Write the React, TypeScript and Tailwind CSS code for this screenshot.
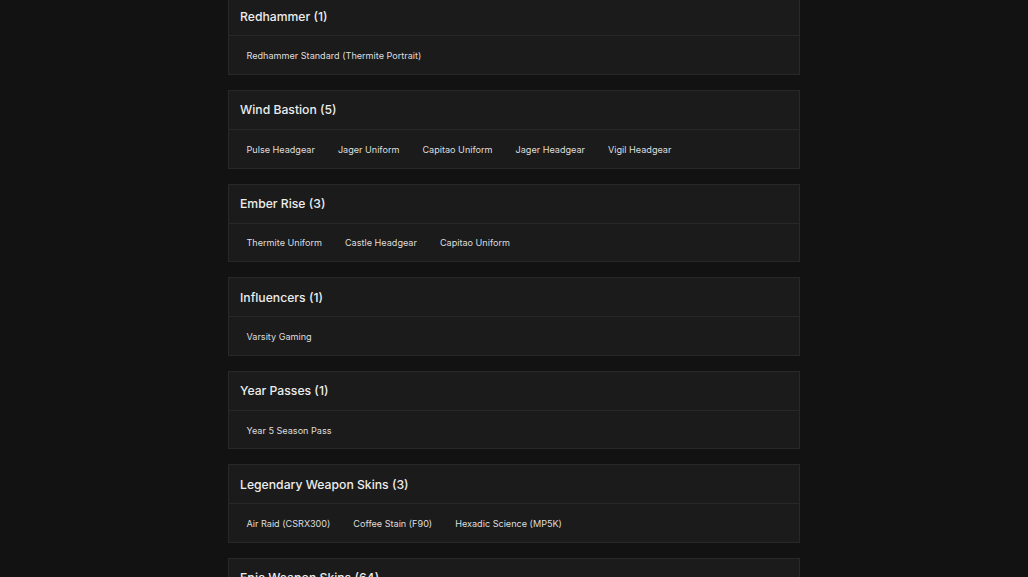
const sections = [
  { title: "Redhammer", items: ["Redhammer Standard (Thermite Portrait)"] },
  {
    title: "Wind Bastion",
    items: ["Pulse Headgear", "Jager Uniform", "Capitao Uniform", "Jager Headgear", "Vigil Headgear"],
  },
  { title: "Ember Rise", items: ["Thermite Uniform", "Castle Headgear", "Capitao Uniform"] },
  { title: "Influencers", items: ["Varsity Gaming"] },
  { title: "Year Passes", items: ["Year 5 Season Pass"] },
  {
    title: "Legendary Weapon Skins",
    items: ["Air Raid (CSRX300)", "Coffee Stain (F90)", "Hexadic Science (MP5K)"],
  },
  { title: "Epic Weapon Skins", count: 64, items: [] as string[] },
];

const App = () => {
  return (
    <div className="h-screen bg-[#121212] font-['Inter',sans-serif] overflow-hidden">
      <div className="w-[572px] mx-auto mt-[-3.6px] flex flex-col gap-[15px]">
        {sections.map((s) => (
          <section key={s.title} className="bg-[#1b1b1b] border border-[#282828]">
            {/* header */}
            <div className="h-[39px] px-[11px] pt-[1px] flex items-center border-b border-[#282828]">
              <h2 className="text-[12.2px] font-medium text-[#ededed]">
                {s.title} ({s.count ?? s.items.length})
              </h2>
            </div>
            {/* items */}
            <div className="h-[37.6px] pl-[17.5px] pt-[1.5px] flex items-center gap-[23px]">
              {s.items.map((it, i) => (
                <span key={i} className="text-[9.1px] text-[#dedede]">
                  {it}
                </span>
              ))}
            </div>
          </section>
        ))}
      </div>
    </div>
  );
};

export default App;
